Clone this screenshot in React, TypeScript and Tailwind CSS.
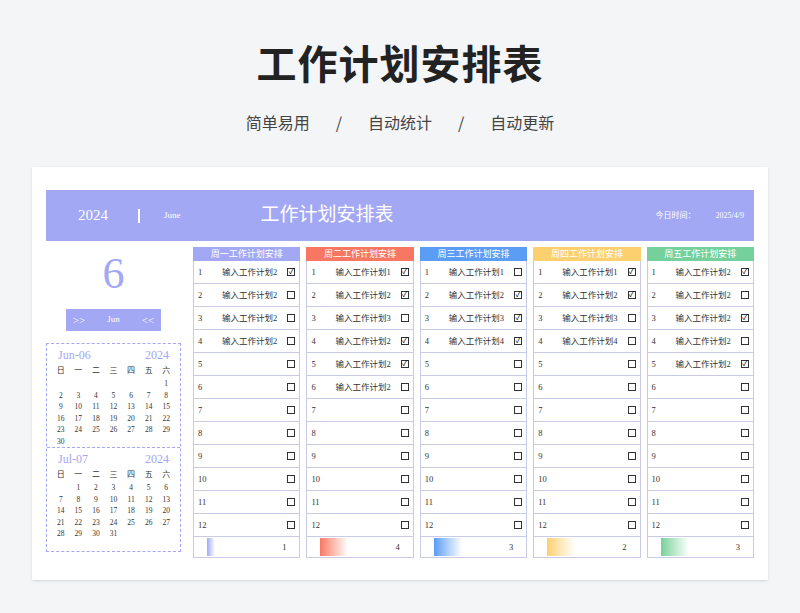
const days = [
  { title: "周一工作计划安排", head: "bg-[#a3a8f4]", bar: "from-[#a3a8f4]", count: 1, texts: ["2", "2", "2", "2"], checks: [1, 0, 0, 0] },
  { title: "周二工作计划安排", head: "bg-[#f77762]", bar: "from-[#f77762]", count: 4, texts: ["1", "2", "3", "2", "2", "2"], checks: [1, 1, 0, 1, 1, 0] },
  { title: "周三工作计划安排", head: "bg-[#5b9cf4]", bar: "from-[#5b9cf4]", count: 3, texts: ["1", "2", "3", "4"], checks: [0, 1, 1, 1] },
  { title: "周四工作计划安排", head: "bg-[#fcd06e]", bar: "from-[#fcd06e]", count: 2, texts: ["1", "2", "3", "4"], checks: [1, 1, 0, 0] },
  { title: "周五工作计划安排", head: "bg-[#74d19b]", bar: "from-[#74d19b]", count: 3, texts: ["2", "2", "2", "2", "2"], checks: [1, 0, 1, 0, 1] },
];

const serif = { fontFamily: '"Liberation Serif", "Noto Sans CJK SC", serif' };

function Box({ on }: { on: boolean }) {
  return (
    <span className="w-[8px] h-[8px] border border-[#333] flex items-center justify-center text-[8px] leading-none text-black">
      {on ? "✓" : ""}
    </span>
  );
}

function Cal({ label, first, days: n }: { label: string; first: number; days: number }) {
  const cells: (number | null)[] = [];
  for (let i = 0; i < first; i++) cells.push(null);
  for (let d = 1; d <= n; d++) cells.push(d);
  return (
    <div className="px-[5px] pt-[3px] h-[103px]">
      <div className="flex justify-between text-[12px] leading-[16px] text-[#a3a8f4] px-[6px]">
        <span>{label}</span>
        <span>2024</span>
      </div>
      <div className="grid grid-cols-7 text-[7.5px] text-[#333] text-center leading-[11.5px] mt-[1px]">
        {["日", "一", "二", "三", "四", "五", "六"].map((w) => (
          <span key={w} className="text-[8px] leading-[14px]">{w}</span>
        ))}
        {cells.map((c, i) => (
          <span key={i}>{c ?? ""}</span>
        ))}
      </div>
    </div>
  );
}

export default function App() {
  return (
    <div className="w-[800px] h-[613px] bg-[#f4f5f7] flex flex-col items-center" style={{ fontFamily: '"Noto Sans CJK SC", sans-serif' }}>
      <h1 className="mt-[36px] text-[40px] font-bold text-[#222] leading-[52px] tracking-[1px]">工作计划安排表</h1>
      <div className="mt-[22px] flex gap-[26px] text-[16px] text-[#444] leading-[24px]">
        <span>简单易用</span><span>/</span><span>自动统计</span><span>/</span><span>自动更新</span>
      </div>
      <div className="mt-[33px] w-[736px] h-[413px] bg-white shadow-sm px-[14px] pt-[23px]" style={serif}>
        <div className="h-[51px] bg-[#a3a8f4] flex items-center text-white">
          <span className="ml-[32px] text-[15px]">2024</span>
          <span className="ml-[30px] w-[2px] h-[14px] bg-white" />
          <span className="ml-[24px] text-[9px]">June</span>
          <span className="ml-[80px] text-[19px]">工作计划安排表</span>
          <span className="ml-auto text-[8px]">今日时间：</span>
          <span className="ml-[20px] mr-[10px] text-[8px]">2025/4/9</span>
        </div>
        <div className="flex mt-[6px]">
          <div className="w-[135px] flex flex-col">
            <div className="text-[44px] text-[#a3a8f4] text-center leading-[50px] mt-[2px]">6</div>
            <div className="mx-[20px] mt-[10px] h-[22px] bg-[#a3a8f4] text-white text-[9px] flex items-center justify-center gap-[22px]">
              <span className="text-[11px]">&gt;&gt;</span><span>Jun</span><span className="text-[11px]">&lt;&lt;</span>
            </div>
            <div className="mt-[12px] border-dashed border-[#a3a8f4] border-[1.5px]">
              <Cal label="Jun-06" first={6} days={30} />
              <div className="border-t-[1.5px] border-dashed border-[#a3a8f4]" />
              <Cal label="Jul-07" first={1} days={31} />
            </div>
          </div>
          <div className="ml-[12px] flex-1 grid grid-cols-5 gap-[6px]">
            {days.map((d) => (
              <div key={d.title} className="flex flex-col">
                <div className={`${d.head} h-[14px] text-white text-[9px] leading-[14px] text-center`}>{d.title}</div>
                <div className="border border-[#c8cae6] border-t-0">
                  {Array.from({ length: 12 }).map((_, i) => (
                    <div key={i} className="h-[23px] border-b border-[#c8cae6] flex items-center px-[4px] text-[8.5px] text-[#333]">
                      <span className="w-[24px]">{i + 1}</span>
                      <span className="flex-1">{d.texts[i] ? `输入工作计划${d.texts[i]}` : ""}</span>
                      <Box on={!!d.checks[i]} />
                    </div>
                  ))}
                  <div className="h-[20px] flex items-center px-[13px] text-[8.5px] text-[#333]">
                    <span className={`h-[18px] ${d.count > 1 ? "w-[28px]" : "w-[8px]"} bg-gradient-to-r ${d.bar} to-white`} />
                    <span className="ml-auto">{d.count}</span>
                  </div>
                </div>
              </div>
            ))}
          </div>
        </div>
      </div>
    </div>
  );
}
